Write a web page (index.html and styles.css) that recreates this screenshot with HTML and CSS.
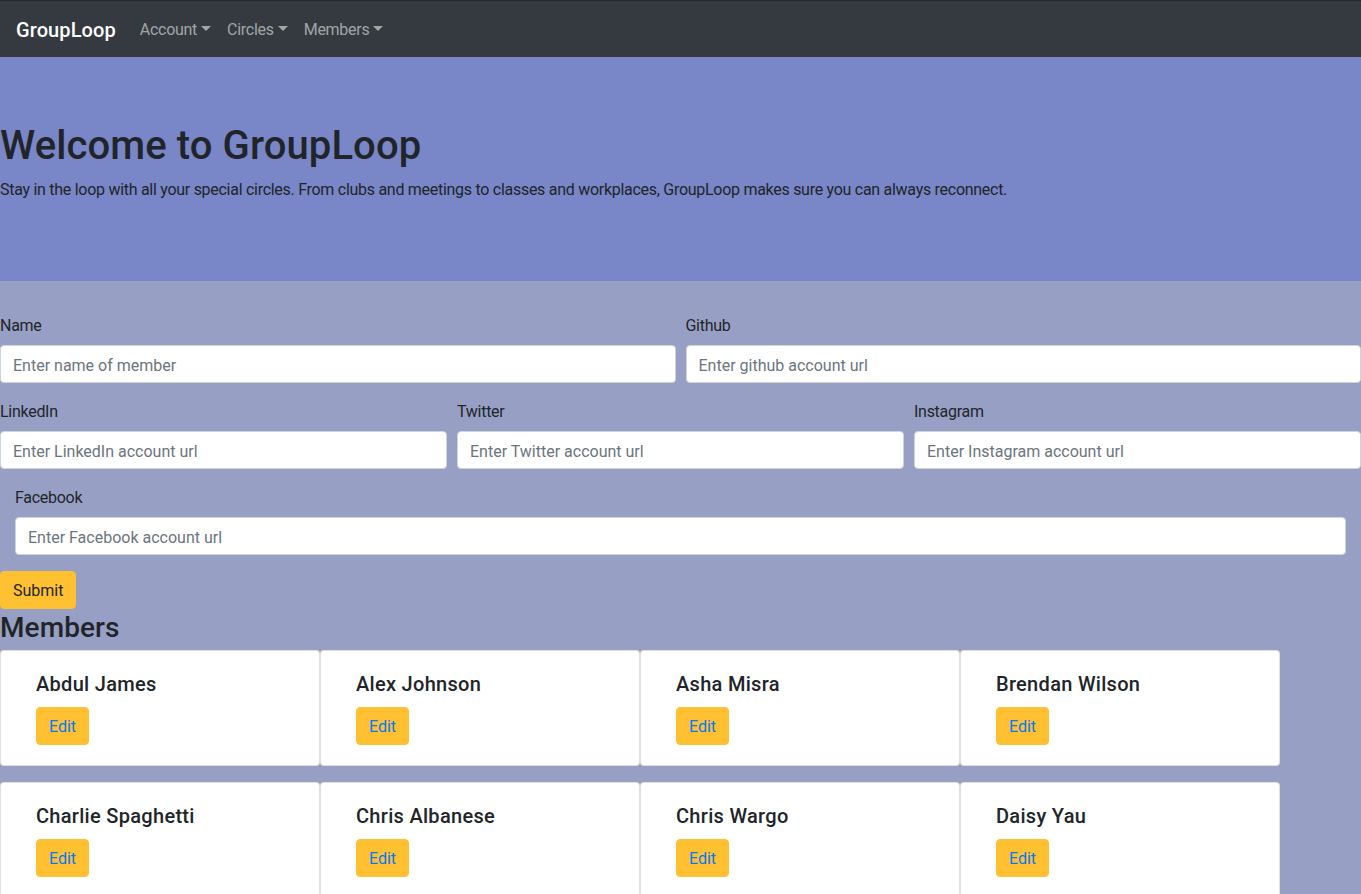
FILE: index.html
```html
<!DOCTYPE html>
<html lang="en">
<head>
<meta charset="utf-8">
<title>GroupLoop</title>
<link rel="stylesheet" href="styles.css">
</head>
<body>
<nav class="navbar">
  <a class="brand" href="#">GroupLoop</a>
  <ul class="nav">
    <li><a class="nav-link" href="#">Account<span class="caret"></span></a></li>
    <li><a class="nav-link" href="#">Circles<span class="caret"></span></a></li>
    <li><a class="nav-link" href="#">Members<span class="caret"></span></a></li>
  </ul>
</nav>
<header class="jumbotron">
  <h1>Welcome to GroupLoop</h1>
  <p>Stay in the loop with all your special circles. From clubs and meetings to classes and workplaces, GroupLoop makes sure you can always reconnect.</p>
</header>
<main>
  <form class="member-form">
    <div class="form-row">
      <div class="form-group col">
        <label>Name</label>
        <input class="form-control" type="text" placeholder="Enter name of member">
      </div>
      <div class="form-group col">
        <label>Github</label>
        <input class="form-control" type="text" placeholder="Enter github account url">
      </div>
    </div>
    <div class="form-row">
      <div class="form-group col">
        <label>LinkedIn</label>
        <input class="form-control" type="text" placeholder="Enter LinkedIn account url">
      </div>
      <div class="form-group col">
        <label>Twitter</label>
        <input class="form-control" type="text" placeholder="Enter Twitter account url">
      </div>
      <div class="form-group col">
        <label>Instagram</label>
        <input class="form-control" type="text" placeholder="Enter Instagram account url">
      </div>
    </div>
    <div class="form-group col-pad">
      <label>Facebook</label>
      <input class="form-control" type="text" placeholder="Enter Facebook account url">
    </div>
    <button class="btn btn-warning" type="button">Submit</button>
  </form>
  <h3 class="section-title">Members</h3>
  <div class="cards">
    <div class="card"><div class="card-body"><h5 class="card-title">Abdul James</h5><button class="btn btn-warning btn-link-text" type="button">Edit</button></div></div>
    <div class="card"><div class="card-body"><h5 class="card-title">Alex Johnson</h5><button class="btn btn-warning btn-link-text" type="button">Edit</button></div></div>
    <div class="card"><div class="card-body"><h5 class="card-title">Asha Misra</h5><button class="btn btn-warning btn-link-text" type="button">Edit</button></div></div>
    <div class="card"><div class="card-body"><h5 class="card-title">Brendan Wilson</h5><button class="btn btn-warning btn-link-text" type="button">Edit</button></div></div>
    <div class="card"><div class="card-body"><h5 class="card-title">Charlie Spaghetti</h5><button class="btn btn-warning btn-link-text" type="button">Edit</button></div></div>
    <div class="card"><div class="card-body"><h5 class="card-title">Chris Albanese</h5><button class="btn btn-warning btn-link-text" type="button">Edit</button></div></div>
    <div class="card"><div class="card-body"><h5 class="card-title">Chris Wargo</h5><button class="btn btn-warning btn-link-text" type="button">Edit</button></div></div>
    <div class="card"><div class="card-body"><h5 class="card-title">Daisy Yau</h5><button class="btn btn-warning btn-link-text" type="button">Edit</button></div></div>
  </div>
</main>
</body>
</html>
```

FILE: styles.css
```css
* { box-sizing: border-box; }
html, body { margin: 0; padding: 0; }
body {
  font-family: Roboto, Inter, "Noto Sans", "Liberation Sans", sans-serif;
  font-size: 16px;
  line-height: 1.5;
  letter-spacing: -0.28px;
  color: #212529;
  background: #97a0c4;
  overflow-x: hidden;
}
.navbar {
  display: flex;
  align-items: center;
  height: 57px;
  padding: 0 16px;
  background: #343a40;
  border-top: 1px solid #23272b;
}
.brand {
  color: #fff;
  text-decoration: none;
  font-size: 20px;
  line-height: 30px;
  font-weight: 500;
  letter-spacing: 0.1px;
  margin-right: 16px;
  padding-top: 1px;
}
.nav {
  display: flex;
  list-style: none;
  margin: 0;
  padding: 0;
}
.nav-link {
  display: block;
  padding: 9px 8px 7px;
  color: rgba(255,255,255,.55);
  text-decoration: none;
  font-size: 16px;
}
.caret {
  display: inline-block;
  margin-left: 4px;
  vertical-align: 4px;
  border-top: 5px solid;
  border-left: 5px solid transparent;
  border-right: 5px solid transparent;
}
.jumbotron {
  background: #7986c8;
  padding: 64px 0;
  margin-bottom: 32px;
}
.jumbotron h1 {
  margin: 0 0 8px;
  font-size: 40px;
  line-height: 48px;
  font-weight: 500;
  letter-spacing: 0.1px;
  padding-top: 1px;
  height: 48px;
}
.jumbotron p {
  margin: 0 0 16px;
  font-size: 16px;
  padding-top: 1px;
  height: 24px;
}
.form-row {
  display: flex;
  margin: 0 -5px;
}
.col {
  flex: 1 1 0;
  min-width: 0;
  padding: 0 5px;
}
.col-pad { padding: 0 15px; }
.form-group { margin-bottom: 16px; }
label {
  display: block;
  margin-bottom: 8px;
  line-height: 24px;
  height: 24px;
  padding-top: 1px;
}
.form-control {
  display: block;
  width: 100%;
  height: 38px;
  padding: 7px 12px 5px;
  font: inherit;
  color: #495057;
  background: #fff;
  border: 1px solid #ced4da;
  border-radius: 4px;
}
.form-control::placeholder { color: #6c757d; opacity: 1; }
.btn {
  display: inline-block;
  height: 38px;
  padding: 7px 12px 5px;
  font: inherit;
  line-height: 24px;
  border: 1px solid transparent;
  border-radius: 4px;
  cursor: pointer;
}
.btn-warning {
  background: #ffc031;
  border-color: #ffc031;
  color: #212529;
}
.btn-link-text { color: #007bff; }
.member-form { margin: 0; }
.section-title {
  margin: 0 0 8px;
  font-size: 28px;
  line-height: 33px;
  height: 33px;
  padding-top: 2px;
  font-weight: 500;
  letter-spacing: 0.1px;
}
.cards {
  display: flex;
  flex-wrap: wrap;
  width: 1280px;
  row-gap: 16px;
}
.card {
  width: 320px;
  padding: 0 15px;
  background: #fff;
  border: 1px solid rgba(0,0,0,.125);
  border-radius: 4px;
}
.card-body { padding: 20px; }
.card-title {
  margin: 0 0 12px;
  font-size: 20px;
  line-height: 24px;
  height: 24px;
  padding-top: 1px;
  font-weight: 500;
  letter-spacing: 0.3px;
}
```
